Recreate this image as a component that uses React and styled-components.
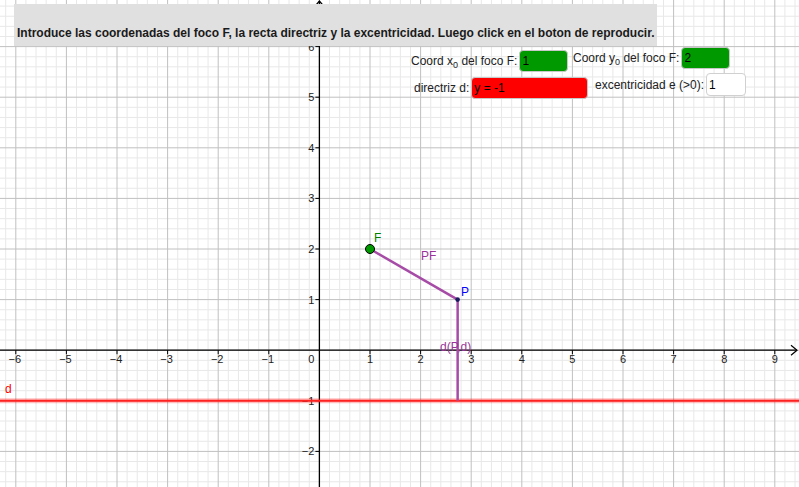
import React from "react"
import styled, { createGlobalStyle } from "styled-components"

const GlobalStyle = createGlobalStyle`
  html, body {
    margin: 0;
    padding: 0;
    background: #ffffff;
    overflow: hidden;
  }
  body {
    font-family: "Liberation Sans", Arial, sans-serif;
  }
`

const Stage = styled.div`
  position: relative;
  width: 799px;
  height: 487px;
  overflow: hidden;
  background: #ffffff;
`

const Board = styled.svg`
  display: block;
  width: 799px;
  height: 487px;
  font-family: "Liberation Sans", Arial, sans-serif;
`

const Banner = styled.div`
  position: absolute;
  left: 14px;
  top: 4px;
  width: 643px;
  height: 42px;
  padding: 0 0 6px 3px;
  box-sizing: border-box;
  display: flex;
  align-items: flex-end;
  background: #e0e0e0;
  color: #1a1a1a;
  font-size: 12px;
  font-weight: bold;
  line-height: 14px;
  white-space: nowrap;
`

const Field = styled.div`
  position: absolute;
  left: ${p => p.$x}px;
  top: ${p => p.$y}px;
  display: flex;
  align-items: center;
  gap: 2px;
  font-size: 12px;
  color: #222;
  white-space: nowrap;
`

const Label = styled.span`
  line-height: 14px;

  sub {
    font-size: 9px;
    vertical-align: -3px;
    line-height: 0;
  }
`

const InputBox = styled.div`
  width: ${p => p.$w}px;
  height: ${p => p.$h}px;
  box-sizing: border-box;
  border: 1px solid ${p => (p.$bg === "#ffffff" ? "#d0d0d0" : "#c8c8c8")};
  border-radius: 4px;
  background: ${p => p.$bg};
  color: #000;
  font-size: 12px;
  display: flex;
  align-items: center;
  padding-left: 2px;
`

const O = { x: 319.4, y: 350.2 }
const U = 50.6
const sx = x => O.x + x * U
const sy = y => O.y - y * U

const W = 799
const H = 487
const PURPLE = "#a64ca6"

function Grid() {
  const minor = []
  const major = []
  for (let k = -35; k <= 50; k++) {
    const x = sx(k / 5)
    if (x < 0 || x > W) continue
    const line = <line key={"v" + k} x1={x} y1={0} x2={x} y2={H} />
    if (k % 5 === 0) major.push(line)
    else minor.push(line)
  }
  for (let k = -15; k <= 35; k++) {
    const y = sy(k / 5)
    if (y < 0 || y > H) continue
    const line = <line key={"h" + k} x1={0} y1={y} x2={W} y2={y} />
    if (k % 5 === 0) major.push(line)
    else minor.push(line)
  }
  return (
    <>
      <g stroke="#e8e8e8" strokeWidth="1">{minor}</g>
      <g stroke="#c0c0c0" strokeWidth="1">{major}</g>
    </>
  )
}

function Axes() {
  const xs = []
  for (let i = -6; i <= 9; i++) xs.push(i)
  const ys = [-2, -1, 1, 2, 3, 4, 5, 6]
  const fmt = n => (n < 0 ? "\u2212" + Math.abs(n) : String(n))
  return (
    <g>
      <line x1={0} y1={O.y} x2={797} y2={O.y} stroke="#000" strokeWidth="1.3" />
      <polyline points={`791,${O.y - 5} 797,${O.y} 791,${O.y + 5}`} fill="none" stroke="#000" strokeWidth="1.2" />
      <line x1={O.x} y1={1} x2={O.x} y2={H} stroke="#000" strokeWidth="1.3" />
      <polyline points={`${O.x - 5},7 ${O.x},1 ${O.x + 5},7`} fill="none" stroke="#000" strokeWidth="1.2" />
      <g stroke="#000" strokeWidth="1">
        {xs.filter(i => i !== 0).map(i => (
          <line key={"tx" + i} x1={sx(i)} y1={O.y} x2={sx(i)} y2={O.y + 4} />
        ))}
        {ys.map(j => (
          <line key={"ty" + j} x1={O.x - 4} y1={sy(j)} x2={O.x} y2={sy(j)} />
        ))}
      </g>
      <g fontSize="11" fill="#222" textAnchor="middle">
        {xs.filter(i => i !== 0).map(i => (
          <text key={"lx" + i} x={sx(i) + (i < 0 ? -1 : 0)} y={363}>{fmt(i)}</text>
        ))}
        <text x={O.x - 8} y={363}>0</text>
      </g>
      <g fontSize="11" fill="#222" textAnchor="end">
        {ys.map(j => (
          <text key={"ly" + j} x={O.x - 5} y={sy(j) + 4}>{fmt(j)}</text>
        ))}
      </g>
    </g>
  )
}

function Construction() {
  const F = { x: sx(1), y: sy(2) }
  const P = { x: sx(1 + Math.sqrt(3)), y: sy(1) }
  const dy = sy(-1)
  return (
    <g>
      <line x1={0} y1={dy} x2={W} y2={dy} stroke="#ff0000" strokeOpacity="0.25" strokeWidth="5" />
      <line x1={0} y1={dy} x2={W} y2={dy} stroke="#ff2020" strokeWidth="2" />
      <text x={5} y={393} fontSize="12" fill="#ff0000">d</text>

      <line x1={F.x} y1={F.y} x2={P.x} y2={P.y} stroke={PURPLE} strokeWidth="2.5" />
      <line x1={P.x} y1={P.y} x2={P.x} y2={dy} stroke={PURPLE} strokeWidth="2.5" />

      <circle cx={F.x} cy={F.y} r="4.5" fill="#009900" stroke="#000" strokeWidth="1" />
      <circle cx={P.x} cy={P.y} r="2.3" fill="#1a1a5e" />

      <text x={374} y={242} fontSize="12" fill="#008000">F</text>
      <text x={461} y={296} fontSize="12" fill="#0000ff">P</text>
      <text x={421} y={260} fontSize="12" fill="#993399">PF</text>
      <text x={440} y={351} fontSize="12" fill="#993399">d(P,d)</text>
    </g>
  )
}

export default function App() {
  return (
    <Stage>
      <GlobalStyle />
      <Board viewBox={`0 0 ${W} ${H}`}>
        <Grid />
        <Axes />
        <Construction />
      </Board>

      <Banner>
        Introduce las coordenadas del foco F, la recta directriz y la excentricidad. Luego click en el boton de reproducir.
      </Banner>

      <Field $x={411} $y={50}>
        <Label>Coord x<sub>0</sub> del foco F:</Label>
        <InputBox $w={49} $h={22} $bg="#009900">1</InputBox>
      </Field>
      <Field $x={573} $y={47}>
        <Label>Coord y<sub>0</sub> del foco F:</Label>
        <InputBox $w={49} $h={22} $bg="#009900">2</InputBox>
      </Field>
      <Field $x={414} $y={77}>
        <Label>directriz d:</Label>
        <InputBox $w={117} $h={22} $bg="#ff0000">y = -1</InputBox>
      </Field>
      <Field $x={595} $y={73}>
        <Label>excentricidad e (&gt;0):</Label>
        <InputBox $w={40} $h={23} $bg="#ffffff">1</InputBox>
      </Field>
    </Stage>
  )
}
